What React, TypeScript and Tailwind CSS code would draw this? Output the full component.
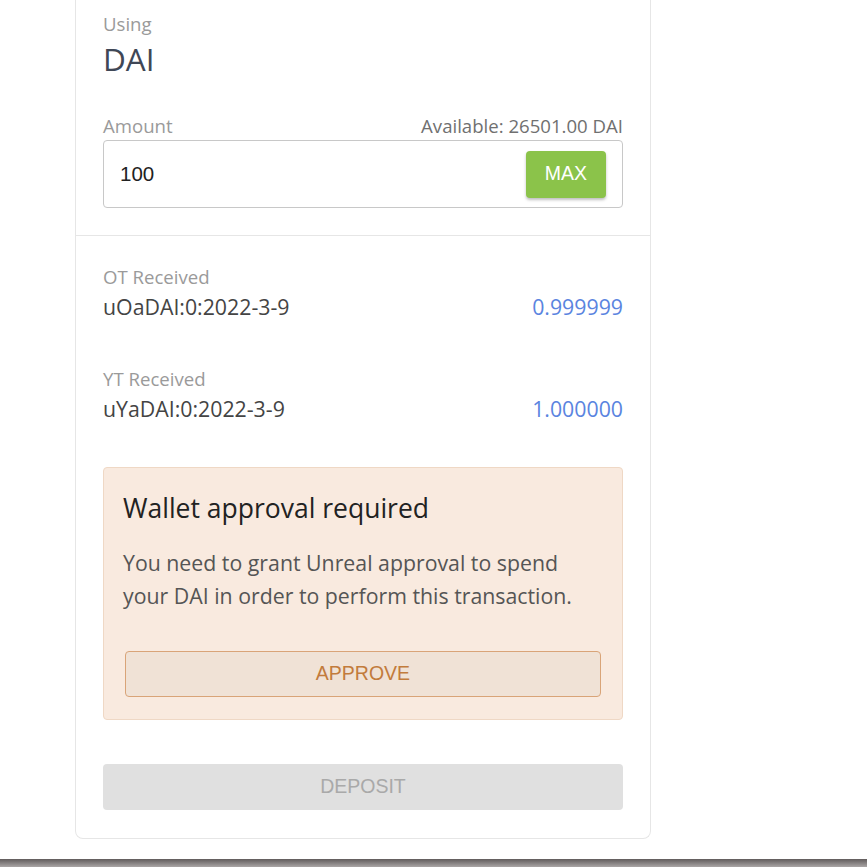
const rows = [
  { label: "OT Received", token: "uOaDAI:0:2022-3-9", value: "0.999999" },
  { label: "YT Received", token: "uYaDAI:0:2022-3-9", value: "1.000000" },
];

export default function App() {
  return (
    <div className="flex h-[867px] flex-col bg-white font-['Open_Sans',sans-serif]">
      <div className="ml-[75px] w-[576px] rounded-b-[8px] border border-t-0 border-[#e6e6e6]">
        <div className="px-[27px] pb-[27px] pt-[12px]">
          <div className="text-[18.6px] leading-[24px] text-[#9a9a9a]">Using</div>
          <div className="mt-[5px] text-[31.5px] leading-[35px] text-[#3f4756]">DAI</div>

          <div className="mt-[38px] flex items-center justify-between text-[18.6px] leading-[24px]">
            <span className="text-[#9a9a9a]">Amount</span>
            <span className="text-[#707070]">Available: 26501.00 DAI</span>
          </div>
          <div className="mt-[2px] flex h-[68px] items-center justify-between rounded-[4px] border border-[#c8c8c8] pl-[16px] pr-[16px]">
            <span className="font-['Liberation_Sans',sans-serif] text-[20.5px] text-[#222]">100</span>
            <button className="h-[47px] w-[80px] rounded-[4px] bg-[#8bc34a] font-['Liberation_Sans',sans-serif] text-[19.5px] text-white shadow-[0_2px_3px_rgba(0,0,0,0.25)]">
              MAX
            </button>
          </div>
        </div>

        <div className="border-t border-[#e6e6e6] px-[27px] pb-[28px] pt-[29px]">
          {rows.map((r, i) => (
            <div key={r.label} className={i > 0 ? "mt-[47px]" : ""}>
              <div className="text-[18.6px] leading-[24px] text-[#9a9a9a]">{r.label}</div>
              <div className="mt-[5px] flex items-center justify-between text-[21.3px] leading-[26px]">
                <span className="text-[#444]">{r.token}</span>
                <span className="text-[#5a84e0]">{r.value}</span>
              </div>
            </div>
          ))}

          <div className="mt-[45px] rounded-[4px] border border-[#efd8c5] bg-[#f9eadf] px-[19px] pb-[22px] pt-[24px]">
            <div className="text-[26.5px] leading-[32px] text-[#222]">Wallet approval required</div>
            <p className="mt-[22px] text-[21.3px] leading-[33px] text-[#555]">
              You need to grant Unreal approval to spend your DAI in order to perform this transaction.
            </p>
            <button className="mx-[2px] mt-[39px] h-[46px] w-[476px] rounded-[4px] border border-[#d9a478] bg-[#f0e2d6] font-['Liberation_Sans',sans-serif] text-[19.5px] text-[#c27b3c]">
              APPROVE
            </button>
          </div>

          <button className="mt-[44px] h-[46px] w-full rounded-[4px] bg-[#e0e0e0] font-['Liberation_Sans',sans-serif] text-[19.5px] text-[#a9a9a9]">
            DEPOSIT
          </button>
        </div>
      </div>
      <div className="flex-1" />
      <div className="h-[8px] bg-gradient-to-b from-[#615c5c] to-[#aaa6a6]" />
    </div>
  );
}
